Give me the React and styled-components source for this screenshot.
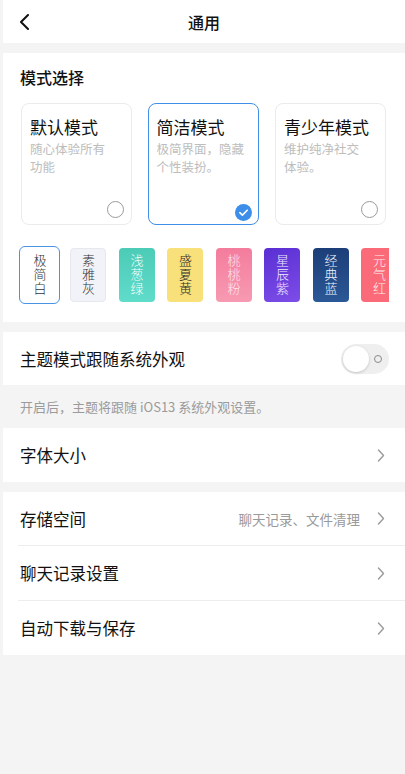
import React from "react";
import styled, { createGlobalStyle } from "styled-components";

const GlobalStyle = createGlobalStyle`
  html, body { margin: 0; padding: 0; background: #f4f4f4; }
  body {
    font-family: "Noto Sans CJK SC", "Noto Sans", Roboto, sans-serif;
    color: #111;
    -webkit-font-smoothing: antialiased;
  }
  * { box-sizing: border-box; }
`;

const Page = styled.div`
  min-height: 774px;
  padding-left: 3px;
  background: #f4f4f4;
`;

const Header = styled.header`
  height: 43px;
  background: #fff;
  display: grid;
  grid-template-columns: 1fr auto 1fr;
  align-items: center;
`;

const BackButton = styled.div`
  padding-left: 16px;
  display: flex;
  align-items: center;
`;

const HeaderTitle = styled.h1`
  margin: 0;
  font-size: 16px;
  font-weight: 500;
  line-height: 20px;
  color: #111;
`;

const Panel = styled.section`
  background: #fff;
  margin-top: ${(p) => p.$gap ?? 10}px;
`;

const ModePanel = styled(Panel)`
  padding: 14px 0 18px 0;
`;

const SectionTitle = styled.div`
  font-size: 16px;
  line-height: 20px;
  font-weight: 500;
  padding-left: 17px;
  color: #111;
`;

const CardRow = styled.div`
  display: flex;
  gap: 16px;
  padding-left: 18px;
  margin-top: 16px;
`;

const ModeCard = styled.div`
  width: 111px;
  height: 122px;
  border-radius: 8px;
  border: ${(p) => (p.$active ? "1.5px solid #3f8fe6" : "1px solid #ebebeb")};
  padding: ${(p) => (p.$active ? "12.5px 7.5px 5.5px 7.5px" : "13px 8px 6px 8px")};
  display: flex;
  flex-direction: column;
`;

const CardTitle = styled.div`
  font-size: 17px;
  line-height: 20px;
  color: #111;
  white-space: nowrap;
`;

const CardDesc = styled.div`
  margin-top: 3px;
  font-size: 12.5px;
  line-height: 18px;
  color: #bdbdbd;
`;

const RadioWrap = styled.div`
  margin-top: auto;
  align-self: flex-end;
  margin-right: -1px;
  width: 17px;
  height: 17px;
`;

const Radio = styled.div`
  width: 17px;
  height: 17px;
  border-radius: 50%;
  border: 1px solid #9a9a9a;
`;

const SwatchRow = styled.div`
  margin: 21px 16px 0 0;
  padding-left: 18.5px;
  height: 58px;
  display: flex;
  align-items: center;
  gap: 12.5px;
  overflow: hidden;
`;

const Swatch = styled.div`
  flex: 0 0 auto;
  width: ${(p) => (p.$active ? 41 : 36)}px;
  height: ${(p) => (p.$active ? 58 : 54)}px;
  margin: 0 ${(p) => (p.$active ? -2.5 : 0)}px;
  border-radius: ${(p) => (p.$active ? 6 : 4)}px;
  background: ${(p) => p.$bg};
  border: ${(p) => p.$border || "none"};
  color: ${(p) => p.$fg};
  display: flex;
  align-items: center;
  justify-content: center;
`;

const SwatchName = styled.span`
  writing-mode: vertical-rl;
  text-orientation: upright;
  font-size: 13px;
  line-height: 14px;
  letter-spacing: 1px;
  font-weight: 300;
`;

const Row = styled.div`
  height: ${(p) => p.$h || 54}px;
  display: flex;
  align-items: center;
  padding: 0 20px 0 17px;
  gap: 10px;
`;

const RowLabel = styled.div`
  flex: 1;
  font-size: 16.5px;
  line-height: 22px;
  color: #111;
`;

const RowValue = styled.div`
  font-size: 13.5px;
  color: #9a9a9a;
  margin-right: 7px;
`;

const Divider = styled.div`
  height: 1px;
  background: #ededed;
  margin-left: 15px;
`;

const Hint = styled.div`
  height: 43px;
  display: flex;
  align-items: center;
  padding-left: 17px;
  font-size: 13px;
  color: #9b9b9b;
`;

const ToggleTrack = styled.div`
  width: 48px;
  height: 30px;
  border-radius: 15px;
  background: #efefef;
  margin-right: -4px;
  display: flex;
  align-items: center;
  padding: 0 2px;
  gap: 5px;
`;

const ToggleKnob = styled.div`
  width: 26px;
  height: 26px;
  border-radius: 50%;
  background: #fff;
  box-shadow: 0 1px 3px rgba(0, 0, 0, 0.18);
`;

const ToggleDot = styled.div`
  width: 8px;
  height: 8px;
  border-radius: 50%;
  border: 1px solid #8a8a8a;
`;

const BackIcon = () => (
  <svg width="11" height="16" viewBox="0 0 11 16">
    <path d="M9 1 L2 8 L9 15" fill="none" stroke="#111" strokeWidth="2" strokeLinecap="round" strokeLinejoin="round" />
  </svg>
);

const Chevron = () => (
  <svg width="8" height="13" viewBox="0 0 8 13">
    <path d="M1.5 1 L6.5 6.5 L1.5 12" fill="none" stroke="#9a9a9a" strokeWidth="1.4" strokeLinecap="round" strokeLinejoin="round" />
  </svg>
);

const CheckIcon = () => (
  <svg width="17" height="17" viewBox="0 0 17 17">
    <circle cx="8.5" cy="8.5" r="8.5" fill="#3d8ee8" />
    <path d="M4.8 8.7 L7.4 11.1 L12.2 6.2" fill="none" stroke="#fff" strokeWidth="1.6" strokeLinecap="round" strokeLinejoin="round" />
  </svg>
);

const modes = [
  { title: "默认模式", desc: ["随心体验所有", "功能"] },
  { title: "简洁模式", desc: ["极简界面，隐藏", "个性装扮。"], active: true },
  { title: "青少年模式", desc: ["维护纯净社交", "体验。"] },
];

const swatches = [
  { name: "极简白", bg: "#fff", fg: "#333", border: "1.5px solid #4a92e4", active: true },
  { name: "素雅灰", bg: "#f2f3f8", fg: "#333", border: "1px solid #e6e8ee" },
  { name: "浅葱绿", bg: "linear-gradient(180deg, #4ccbb7, #5fdcca)", fg: "#f4fffc" },
  { name: "盛夏黄", bg: "#f8e07b", fg: "#2a2a2a" },
  { name: "桃桃粉", bg: "linear-gradient(180deg, #f47c9d, #f79ab2)", fg: "#ffe6ee" },
  { name: "星辰紫", bg: "linear-gradient(160deg, #5a2fd3, #7d4de8)", fg: "#f1ebff" },
  { name: "经典蓝", bg: "linear-gradient(180deg, #1c3e78, #2b5896)", fg: "#f0f4ff" },
  { name: "元气红", bg: "#fb6a78", fg: "#fff0f2" },
];

export default function App() {
  return (
    <>
      <GlobalStyle />
      <Page>
        <Header>
          <BackButton>
            <BackIcon />
          </BackButton>
          <HeaderTitle>通用</HeaderTitle>
          <div />
        </Header>

        <ModePanel>
          <SectionTitle>模式选择</SectionTitle>
          <CardRow>
            {modes.map((m) => (
              <ModeCard key={m.title} $active={m.active}>
                <CardTitle>{m.title}</CardTitle>
                <CardDesc>
                  {m.desc.map((d) => (
                    <div key={d}>{d}</div>
                  ))}
                </CardDesc>
                <RadioWrap>{m.active ? <CheckIcon /> : <Radio />}</RadioWrap>
              </ModeCard>
            ))}
          </CardRow>
          <SwatchRow>
            {swatches.map((s) => (
              <Swatch key={s.name} $bg={s.bg} $fg={s.fg} $border={s.border} $active={s.active}>
                <SwatchName>{s.name}</SwatchName>
              </Swatch>
            ))}
          </SwatchRow>
        </ModePanel>

        <Panel>
          <Row $h={53}>
            <RowLabel>主题模式跟随系统外观</RowLabel>
            <ToggleTrack>
              <ToggleKnob />
              <ToggleDot />
            </ToggleTrack>
          </Row>
        </Panel>
        <Hint>开启后，主题将跟随 iOS13 系统外观设置。</Hint>

        <Panel $gap={0}>
          <Row $h={54}>
            <RowLabel>字体大小</RowLabel>
            <Chevron />
          </Row>
        </Panel>

        <Panel>
          <Row $h={53}>
            <RowLabel>存储空间</RowLabel>
            <RowValue>聊天记录、文件清理</RowValue>
            <Chevron />
          </Row>
          <Divider />
          <Row $h={54}>
            <RowLabel>聊天记录设置</RowLabel>
            <Chevron />
          </Row>
          <Divider />
          <Row $h={54}>
            <RowLabel>自动下载与保存</RowLabel>
            <Chevron />
          </Row>
        </Panel>
      </Page>
    </>
  );
}
